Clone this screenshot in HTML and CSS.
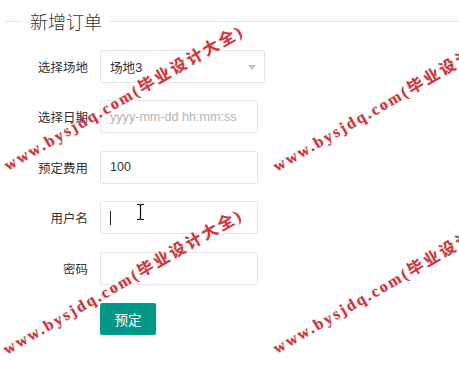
FILE: index.html
```html
<!DOCTYPE html>
<html lang="zh-CN">
<head>
<meta charset="utf-8">
<title>新增订单</title>
<link rel="stylesheet" href="styles.css">
</head>
<body>
<div class="page">
  <fieldset class="field-title"><legend>新增订单</legend></fieldset>
  <form class="form">
    <div class="item">
      <label class="label">选择场地</label>
      <div class="select"><span>场地3</span><i class="arrow"></i></div>
    </div>
    <div class="item">
      <label class="label">选择日期</label>
      <input class="input" type="text" placeholder="yyyy-mm-dd hh:mm:ss">
    </div>
    <div class="item">
      <label class="label">预定费用</label>
      <input class="input" type="text" value="100">
    </div>
    <div class="item">
      <label class="label">用户名</label>
      <div class="input-wrap">
        <input class="input" type="text">
        <span class="caret"></span>
      </div>
    </div>
    <div class="item">
      <label class="label">密码</label>
      <input class="input" type="password">
    </div>
    <div class="item">
      <span class="label"></span>
      <button class="btn" type="button">预定</button>
    </div>
  </form>

  <svg class="ibeam" width="9" height="18" viewBox="0 0 9 18">
    <path d="M1 1.5h2.5l1 1 1-1H8M4.5 2.5v13M1 16.5h2.5l1-1 1 1H8" fill="none" stroke="#fff" stroke-width="3" stroke-linecap="round"/>
    <path d="M1 1.5h2.5l1 1 1-1H8M4.5 2.5v13M1 16.5h2.5l1-1 1 1H8" fill="none" stroke="#111" stroke-width="1.2"/>
  </svg>

  <div class="wm wm1"><span class="wm-lat">www.bysjdq.com</span><span class="wm-cjk">(毕业设计大全)</span></div>
  <div class="wm wm2"><span class="wm-lat">www.bysjdq.com</span><span class="wm-cjk">(毕业设计大全)</span></div>
  <div class="wm wm3"><span class="wm-lat">www.bysjdq.com</span><span class="wm-cjk">(毕业设计大全)</span></div>
  <div class="wm wm4"><span class="wm-lat">www.bysjdq.com</span><span class="wm-cjk">(毕业设计大全)</span></div>
</div>
</body>
</html>
```
FILE: styles.css
```css
html, body {
  margin: 0;
  padding: 0;
  background: #fff;
}
body {
  font-family: "Liberation Sans", "Noto Sans CJK SC", sans-serif;
  color: #333;
  overflow: hidden;
}
.page {
  position: relative;
  width: 459px;
  height: 385px;
  overflow: hidden;
  padding-left: 5px;
  box-sizing: border-box;
}
.field-title {
  margin: 9px 0 0 0;
  padding: 0;
  border: none;
  border-top: 1px solid #e6e6e6;
  min-width: 0;
}
.field-title legend {
  margin-left: 17px;
  padding: 0 8px;
  font-family: "Noto Sans CJK SC", sans-serif;
  font-size: 18px;
  font-weight: 300;
  line-height: 24px;
  color: #333;
}
.form {
  margin-top: 17px;
  margin-left: -5px;
}
.item {
  display: flex;
  align-items: center;
  height: 33px;
  margin-bottom: 17.4px;
}
.label {
  width: 88px;
  margin-right: 12px;
  text-align: right;
  font-family: "Noto Sans CJK SC", sans-serif;
  font-size: 12.5px;
  color: #333;
  flex: none;
}
.input, .select {
  box-sizing: border-box;
  height: 33px;
  width: 158px;
  border: 1px solid #e6e6e6;
  border-radius: 2px;
  background: #fff;
  padding: 0 9px;
  font-family: "Liberation Sans", "Noto Sans CJK SC", sans-serif;
  font-size: 12.6px;
  color: #333;
  outline: none;
  margin: 0;
}
.input::placeholder {
  color: #b4b4b4;
}
.select {
  width: 165px;
  display: flex;
  align-items: center;
  justify-content: space-between;
  padding-right: 8px;
}
.arrow {
  display: block;
  width: 0;
  height: 0;
  border-top: 5px solid #c2c2c2;
  border-left: 4px solid transparent;
  border-right: 4px solid transparent;
  margin-top: 1px;
}
.input-wrap {
  position: relative;
  height: 33px;
}
.caret {
  position: absolute;
  left: 10px;
  top: 10px;
  width: 1px;
  height: 14px;
  background: #222;
}
.btn {
  box-sizing: border-box;
  height: 32px;
  width: 56px;
  border: none;
  border-radius: 2px;
  background: #009688;
  color: #fff;
  font-family: "Noto Sans CJK SC", sans-serif;
  font-size: 13.5px;
  padding: 0;
  margin-top: 1px;
}
.ibeam {
  position: absolute;
  left: 136px;
  top: 203px;
}
.wm {
  position: absolute;
  white-space: nowrap;
  line-height: 18px;
  height: 18px;
  color: #d8323b;
  font-weight: bold;
  transform-origin: 0 14px;
  transform: rotate(-30deg);
  text-shadow: 0 0 1px rgba(90, 60, 60, 0.45);
  pointer-events: none;
}
.wm-lat {
  font-family: "Liberation Serif", serif;
  font-size: 16px;
  letter-spacing: 2.2px;
}
.wm-cjk {
  font-family: "Liberation Serif", "Noto Sans CJK SC", serif;
  font-size: 16px;
  font-weight: 600;
  letter-spacing: 2.5px;
}
.wm1 { left: 8px; top: 157px; }
.wm2 { left: 277px; top: 158px; }
.wm3 { left: 7px; top: 341px; }
.wm4 { left: 277px; top: 340px; }
```
